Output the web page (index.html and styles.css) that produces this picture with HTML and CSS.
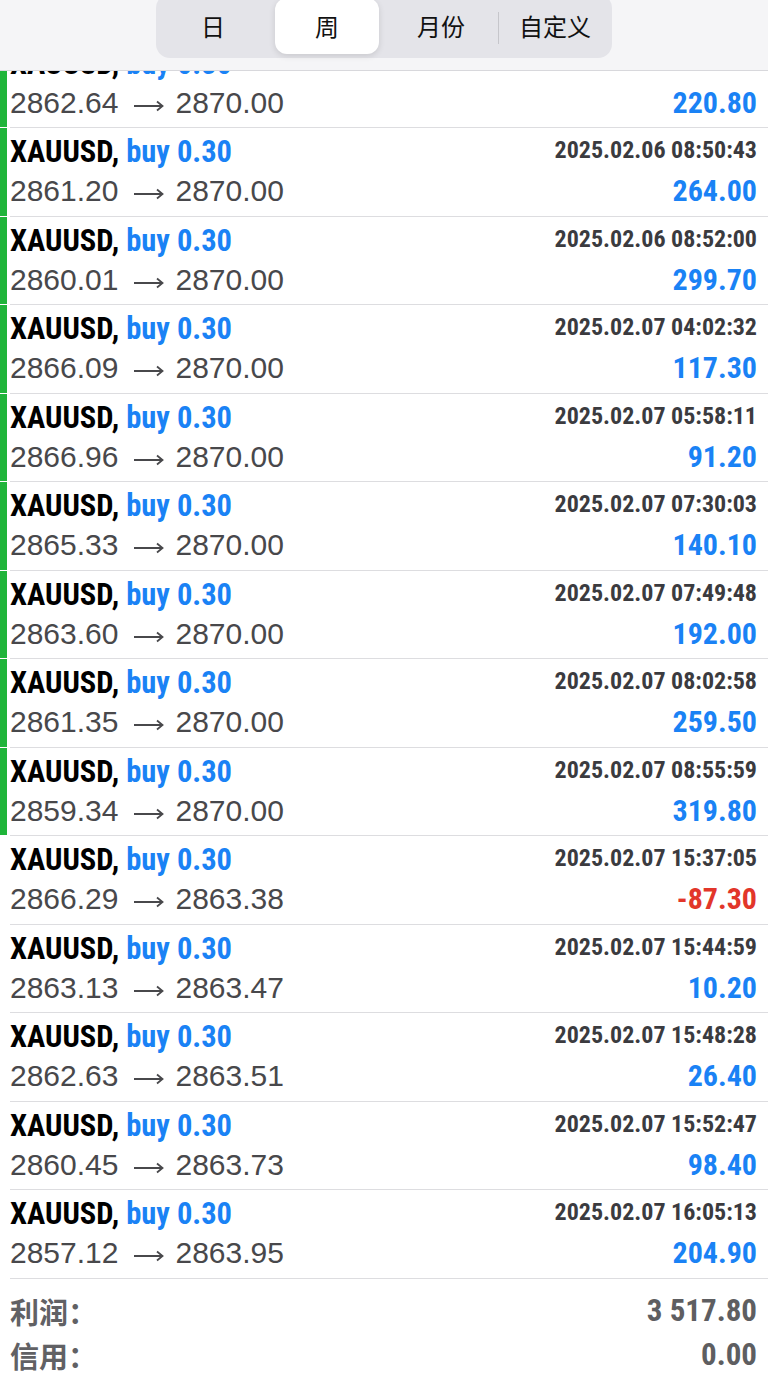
FILE: index.html
```html
<!DOCTYPE html>
<html>
<head>
    <title>History</title>
    <link rel="stylesheet" href="styles.css">
</head>
<body>
    <header class="topbar">
        <nav class="segments">
            <span class="seg">日</span>
            <span class="seg active">周</span>
            <span class="seg">月份</span>
            <span class="seg divided">自定义</span>
        </nav>
    </header>

    <div class="trade-list">
        <div class="trade win">
            <div class="stripe"></div>
            <div class="trade-body">
                <div class="line top"><span class="symbol">XAUUSD, <span class="side">buy 0.30</span></span><span class="time">2025.02.06 08:48:12</span></div>
                <div class="line"><span class="price">2862.64<svg class="arrow" viewBox="0 0 30 12"><path d="M0 6H28M23 1.5L28.5 6L23 10.5"/></svg>2870.00</span><span class="profit">220.80</span></div>
            </div>
        </div>
        <div class="trade win">
            <div class="stripe"></div>
            <div class="trade-body">
                <div class="line top"><span class="symbol">XAUUSD, <span class="side">buy 0.30</span></span><span class="time">2025.02.06 08:50:43</span></div>
                <div class="line"><span class="price">2861.20<svg class="arrow" viewBox="0 0 30 12"><path d="M0 6H28M23 1.5L28.5 6L23 10.5"/></svg>2870.00</span><span class="profit">264.00</span></div>
            </div>
        </div>
        <div class="trade win">
            <div class="stripe"></div>
            <div class="trade-body">
                <div class="line top"><span class="symbol">XAUUSD, <span class="side">buy 0.30</span></span><span class="time">2025.02.06 08:52:00</span></div>
                <div class="line"><span class="price">2860.01<svg class="arrow" viewBox="0 0 30 12"><path d="M0 6H28M23 1.5L28.5 6L23 10.5"/></svg>2870.00</span><span class="profit">299.70</span></div>
            </div>
        </div>
        <div class="trade win">
            <div class="stripe"></div>
            <div class="trade-body">
                <div class="line top"><span class="symbol">XAUUSD, <span class="side">buy 0.30</span></span><span class="time">2025.02.07 04:02:32</span></div>
                <div class="line"><span class="price">2866.09<svg class="arrow" viewBox="0 0 30 12"><path d="M0 6H28M23 1.5L28.5 6L23 10.5"/></svg>2870.00</span><span class="profit">117.30</span></div>
            </div>
        </div>
        <div class="trade win">
            <div class="stripe"></div>
            <div class="trade-body">
                <div class="line top"><span class="symbol">XAUUSD, <span class="side">buy 0.30</span></span><span class="time">2025.02.07 05:58:11</span></div>
                <div class="line"><span class="price">2866.96<svg class="arrow" viewBox="0 0 30 12"><path d="M0 6H28M23 1.5L28.5 6L23 10.5"/></svg>2870.00</span><span class="profit">91.20</span></div>
            </div>
        </div>
        <div class="trade win">
            <div class="stripe"></div>
            <div class="trade-body">
                <div class="line top"><span class="symbol">XAUUSD, <span class="side">buy 0.30</span></span><span class="time">2025.02.07 07:30:03</span></div>
                <div class="line"><span class="price">2865.33<svg class="arrow" viewBox="0 0 30 12"><path d="M0 6H28M23 1.5L28.5 6L23 10.5"/></svg>2870.00</span><span class="profit">140.10</span></div>
            </div>
        </div>
        <div class="trade win">
            <div class="stripe"></div>
            <div class="trade-body">
                <div class="line top"><span class="symbol">XAUUSD, <span class="side">buy 0.30</span></span><span class="time">2025.02.07 07:49:48</span></div>
                <div class="line"><span class="price">2863.60<svg class="arrow" viewBox="0 0 30 12"><path d="M0 6H28M23 1.5L28.5 6L23 10.5"/></svg>2870.00</span><span class="profit">192.00</span></div>
            </div>
        </div>
        <div class="trade win">
            <div class="stripe"></div>
            <div class="trade-body">
                <div class="line top"><span class="symbol">XAUUSD, <span class="side">buy 0.30</span></span><span class="time">2025.02.07 08:02:58</span></div>
                <div class="line"><span class="price">2861.35<svg class="arrow" viewBox="0 0 30 12"><path d="M0 6H28M23 1.5L28.5 6L23 10.5"/></svg>2870.00</span><span class="profit">259.50</span></div>
            </div>
        </div>
        <div class="trade win">
            <div class="stripe"></div>
            <div class="trade-body">
                <div class="line top"><span class="symbol">XAUUSD, <span class="side">buy 0.30</span></span><span class="time">2025.02.07 08:55:59</span></div>
                <div class="line"><span class="price">2859.34<svg class="arrow" viewBox="0 0 30 12"><path d="M0 6H28M23 1.5L28.5 6L23 10.5"/></svg>2870.00</span><span class="profit">319.80</span></div>
            </div>
        </div>
        <div class="trade">
            <div class="stripe"></div>
            <div class="trade-body">
                <div class="line top"><span class="symbol">XAUUSD, <span class="side">buy 0.30</span></span><span class="time">2025.02.07 15:37:05</span></div>
                <div class="line"><span class="price">2866.29<svg class="arrow" viewBox="0 0 30 12"><path d="M0 6H28M23 1.5L28.5 6L23 10.5"/></svg>2863.38</span><span class="profit loss">-87.30</span></div>
            </div>
        </div>
        <div class="trade">
            <div class="stripe"></div>
            <div class="trade-body">
                <div class="line top"><span class="symbol">XAUUSD, <span class="side">buy 0.30</span></span><span class="time">2025.02.07 15:44:59</span></div>
                <div class="line"><span class="price">2863.13<svg class="arrow" viewBox="0 0 30 12"><path d="M0 6H28M23 1.5L28.5 6L23 10.5"/></svg>2863.47</span><span class="profit">10.20</span></div>
            </div>
        </div>
        <div class="trade">
            <div class="stripe"></div>
            <div class="trade-body">
                <div class="line top"><span class="symbol">XAUUSD, <span class="side">buy 0.30</span></span><span class="time">2025.02.07 15:48:28</span></div>
                <div class="line"><span class="price">2862.63<svg class="arrow" viewBox="0 0 30 12"><path d="M0 6H28M23 1.5L28.5 6L23 10.5"/></svg>2863.51</span><span class="profit">26.40</span></div>
            </div>
        </div>
        <div class="trade">
            <div class="stripe"></div>
            <div class="trade-body">
                <div class="line top"><span class="symbol">XAUUSD, <span class="side">buy 0.30</span></span><span class="time">2025.02.07 15:52:47</span></div>
                <div class="line"><span class="price">2860.45<svg class="arrow" viewBox="0 0 30 12"><path d="M0 6H28M23 1.5L28.5 6L23 10.5"/></svg>2863.73</span><span class="profit">98.40</span></div>
            </div>
        </div>
        <div class="trade">
            <div class="stripe"></div>
            <div class="trade-body">
                <div class="line top"><span class="symbol">XAUUSD, <span class="side">buy 0.30</span></span><span class="time">2025.02.07 16:05:13</span></div>
                <div class="line"><span class="price">2857.12<svg class="arrow" viewBox="0 0 30 12"><path d="M0 6H28M23 1.5L28.5 6L23 10.5"/></svg>2863.95</span><span class="profit">204.90</span></div>
            </div>
        </div>
    </div>

    <div class="summary">
        <div class="summary-row"><span class="summary-label">利润：</span><span class="summary-value">3 517.80</span></div>
        <div class="summary-row"><span class="summary-label">信用：</span><span class="summary-value">0.00</span></div>
    </div>
</body>
</html>
```
FILE: styles.css
```css
body {
    margin: 0;
    background-color: #fff;
    font-family: "Liberation Sans", Arial, sans-serif;
    color: #000;
}

/* top bar with the period switch, lies over the scrolled list */
.topbar {
    position: sticky;
    top: 0;
    z-index: 2;
    height: 71px;
    box-sizing: border-box;
    background-color: #f5f5f7;
    border-bottom: 1px solid #d8d8dc;
    display: flex;
    justify-content: center;
    overflow: hidden;
}

.segments {
    display: flex;
    margin-top: -6px;
    height: 64px;
    box-sizing: border-box;
    padding: 4px 0;
    background-color: #e4e4e9;
    border-radius: 14px;
}

.seg {
    position: relative;
    width: 104px;
    margin: 0 5px;
    border-radius: 12px;
    font-family: "Noto Sans CJK SC", sans-serif;
    font-size: 24px;
    line-height: 56px;
    text-align: center;
    color: #111;
}

.seg.active {
    background-color: #fff;
    box-shadow: 0 2px 6px rgba(0, 0, 0, 0.12);
}

.seg.divided::before {
    content: "";
    position: absolute;
    left: -5px;
    top: 14px;
    bottom: 10px;
    width: 1px;
    background-color: #c6c6cb;
}

/* trade rows */
.trade-list {
    margin-top: -31.5px;
}

.trade {
    display: flex;
    height: 88.5px;
}

.stripe {
    width: 7px;
    margin-bottom: 1px;
}

.win .stripe {
    background-color: #1fb53a;
}

.trade-body {
    flex: 1;
    margin-left: 3px;
    padding: 6px 11px 0 0;
    border-bottom: 1px solid #dddde0;
}

.line {
    display: flex;
    justify-content: space-between;
    align-items: baseline;
    margin-top: 3px;
}

.line.top {
    align-items: flex-start;
    margin-top: 0;
}

.symbol {
    font-family: "Roboto Condensed", sans-serif;
    font-weight: bold;
    font-size: 30.5px;
    line-height: 36px;
    color: #000;
}

.side {
    color: #1a82f5;
}

.time {
    font-family: "Roboto Condensed", sans-serif;
    font-weight: bold;
    font-size: 24px;
    line-height: 32px;
    color: #3b3b3f;
}

.price {
    font-size: 30px;
    line-height: 36px;
    color: #48484b;
}

.arrow {
    width: 30px;
    height: 12px;
    margin: 0 11px 0 16px;
    vertical-align: 1px;
    fill: none;
    stroke: #48484b;
    stroke-width: 1.8;
}

.profit {
    font-family: "Roboto Condensed", sans-serif;
    font-weight: bold;
    font-size: 30px;
    line-height: 36px;
    color: #1a82f5;
}

.profit.loss {
    color: #e2362a;
}

/* totals under the list */
.summary {
    padding: 10px 11px 0 10px;
}

.summary-row {
    display: flex;
    justify-content: space-between;
    align-items: center;
    height: 44px;
}

.summary-label {
    font-family: "Noto Sans CJK SC", sans-serif;
    font-weight: bold;
    font-size: 29px;
    color: #616164;
}

.summary-value {
    font-family: "Roboto Condensed", sans-serif;
    font-weight: bold;
    font-size: 31px;
    color: #5e5e61;
}
```
